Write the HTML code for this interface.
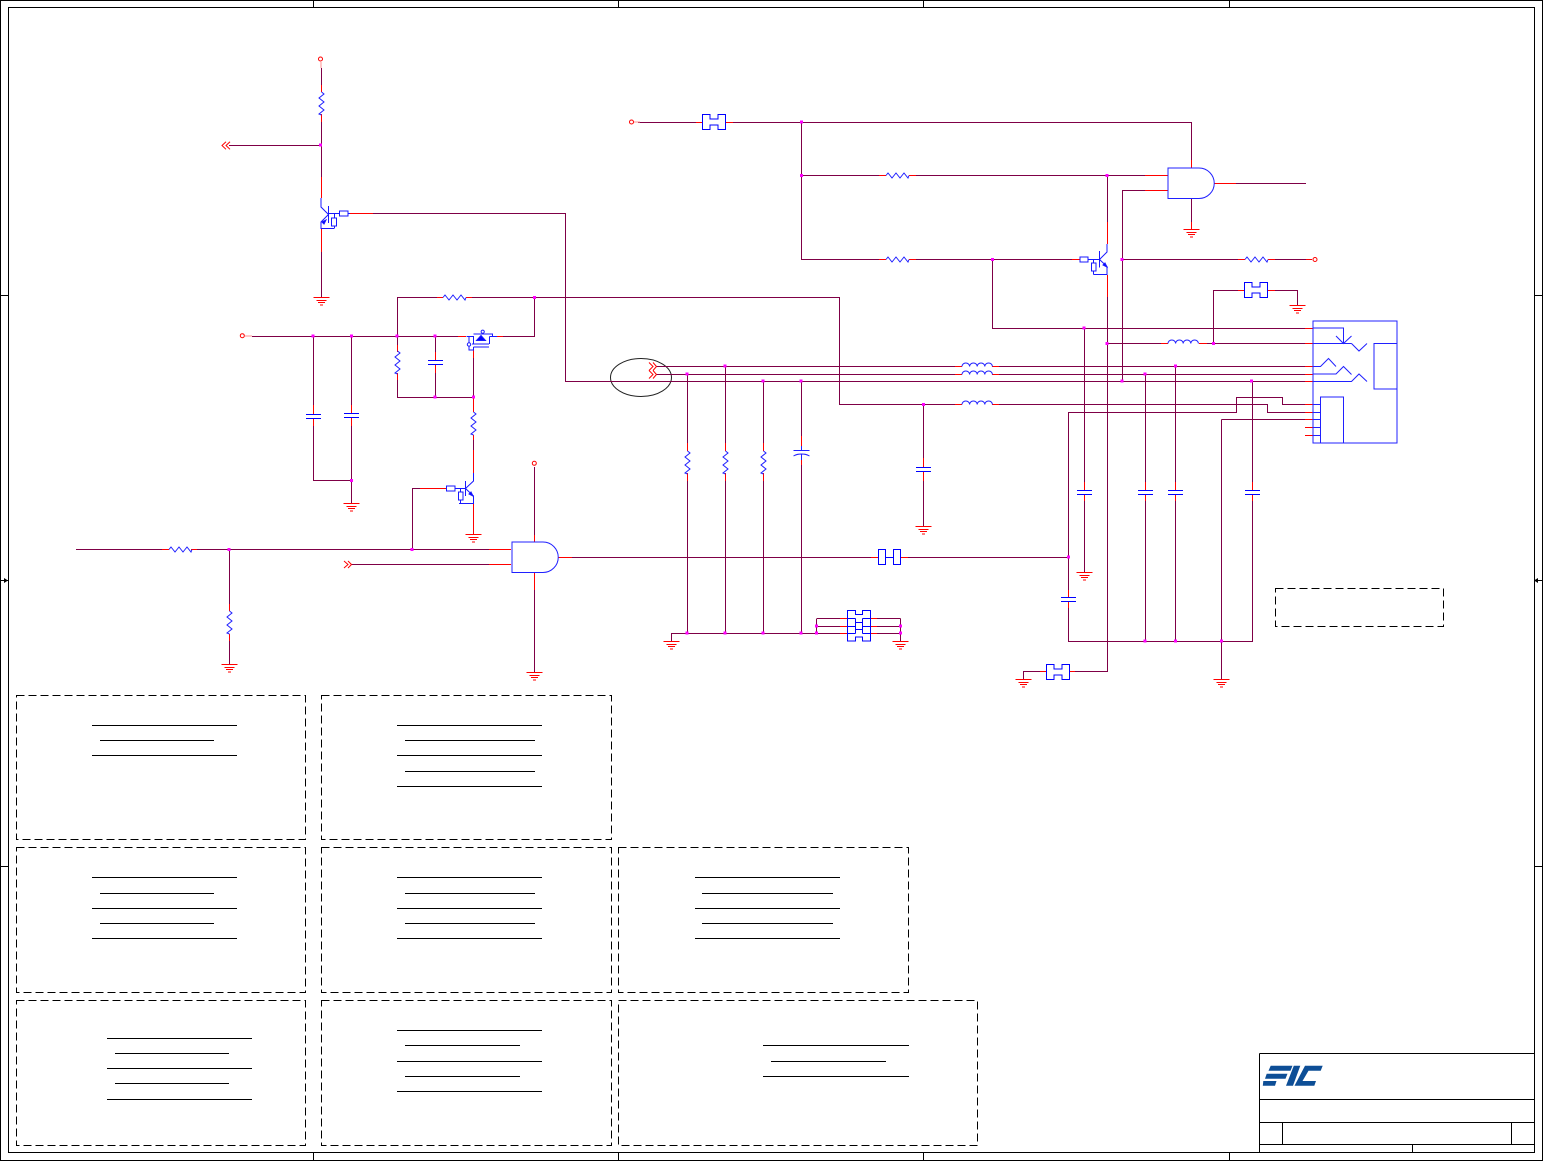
<!DOCTYPE html>
<html>
<head>
<meta charset="utf-8">
<title>Schematic</title>
<style>
html,body{margin:0;padding:0;background:#fff}
svg{display:block}
</style>
</head>
<body>
<svg xmlns="http://www.w3.org/2000/svg" width="1543" height="1161" viewBox="0 0 1543 1161" fill="none">
<defs>
<g id="gnd" stroke="#ff0000"><path d="M-8 0H8M-5 3H5M-3.5 5H3.5M-1.5 7.500H1.500"/></g>
<path id="rv" stroke="#2020ff" d="M0 0l2.500 2l-5 4l5 4l-5 4l5 4l-5 4l2.500 1"/>
<path id="rh" stroke="#2020ff" d="M0 0l2 -2.500l4 5l4 -5l4 5l4 -5l4 5l1 -2.500"/>
<path id="capv" stroke="#0000ff" d="M-7.500 0H7.500M-7.500 4H7.500"/>
<path id="conn" stroke="#0000ff" d="M0 0H7.500V4.500H15.500V0H23V15H15.500V10.500H7.500V15H0Z"/>
<path id="ind" stroke="#2020ff" d="M0 0a3.800 3.500 0 0 1 7.600 0a3.800 3.500 0 0 1 7.600 0a3.800 3.500 0 0 1 7.600 0a3.800 3.500 0 0 1 7.600 0"/>
<rect id="j" x="-1.500" y="-1.500" width="3" height="3" fill="#ff00ff"/>
</defs>

<!-- frame -->
<g stroke="#000">
<rect x="0.500" y="0.500" width="1542" height="1160"/>
<rect x="8.500" y="7.500" width="1526" height="1145"/>
<path d="M313.500 0V8M618.500 0V8M923.500 0V8M1229.500 0V8M313.500 1152V1160M618.500 1152V1160M923.500 1152V1160M1229.500 1152V1160M0 295.500H8M0 866.500H8M1534 295.500H1542M1534 866.500H1542M0 580.500H8M1534 580.500H1542"/>
</g>
<path fill="#000" d="M8 580.500L4 578V583ZM1534 580.500L1538 578V583Z"/>

<!-- title block -->
<g stroke="#000">
<path d="M1259.500 1053.500H1534M1259.500 1053.500V1152M1259.500 1099.500H1534M1259.500 1122.500H1534M1259.500 1144.500H1534M1282.500 1122.500V1144.500M1511.500 1122.500V1144.500M1412.500 1144.500V1152"/>
</g>
<g fill="#0d4e96">
<path d="M1270.700 1065.700H1292.500L1290.500 1070.700H1268.500ZM1266.700 1073.700H1287.500L1285.500 1078.700H1265ZM1263.300 1081H1276.500L1275 1085.700H1262.800Z"/>
<path d="M1293.800 1065.700H1300.300L1293 1085.700H1286Z"/>
<path d="M1305 1065.700H1322.700L1320.700 1070.700H1308.500L1302.500 1081H1316L1314.300 1085.700H1294.500Z"/>
</g>

<!-- dashed boxes -->
<g stroke="#000" stroke-dasharray="8 4">
<rect x="16.500" y="695.500" width="289" height="144"/>
<rect x="321.500" y="695.500" width="290" height="144"/>
<rect x="16.500" y="847.500" width="289" height="145"/>
<rect x="321.500" y="847.500" width="290" height="145"/>
<rect x="618.500" y="847.500" width="290" height="145"/>
<rect x="16.500" y="1000.500" width="289" height="145"/>
<rect x="321.500" y="1000.500" width="290" height="145"/>
<rect x="618.500" y="1000.500" width="359" height="145"/>
<rect x="1275.500" y="588.500" width="168" height="38"/>
</g>
<g stroke="#000">
<path d="M92 725.500H237M100 740.500H214M92 755.500H237"/>
<path d="M397 725.500H542M405 740.500H535M397 755.500H542M405 771.500H535M397 786.500H542"/>
<path d="M92 877.500H237M100 893.500H214M92 908.500H237M100 923.500H214M92 938.500H237"/>
<path d="M397 877.500H542M405 893.500H535M397 908.500H542M405 923.500H535M397 938.500H542"/>
<path d="M695 877.500H840M702 893.500H833M695 908.500H840M702 923.500H833M695 938.500H840"/>
<path d="M107 1038.500H252M115 1053.500H229M107 1068.500H252M115 1083.500H229M107 1099.500H252"/>
<path d="M397 1030.500H542M405 1045.500H520M397 1061.500H542M405 1076.500H520M397 1091.500H542"/>
<path d="M763 1045.500H909M771 1061.500H886M763 1076.500H909"/>
</g>

<ellipse cx="641" cy="377.500" rx="30.500" ry="19" stroke="#222"/>

<!-- purple wires -->
<path stroke="#7f0046" d="
M321.500 68V85M321.500 122V177M321.500 252V297
M229 145.500H321.500
M373 213.500H565.500V381.500H1305
M397.500 345V336.500M397.500 380V397.500H473.500
M397.500 336.500V297.500H437M472 297.500H839.500V404.500H955
M252 336.500H458
M313.500 336.500V405M313.500 426V480.500H351.500
M351.500 336.500V405M351.500 426V503
M435.500 336.500V352M435.500 373V397.500
M503 336.500H534.500V297.500
M473.500 358V397.500M473.500 440V450
M412.500 549.500V488.500H420
M76 549.500H162M197 549.500H489
M351 564.500H489
M229.500 549.500V604M229.500 641V664
M534.500 467V535M534.500 590V672
M572 557.500H871M908 557.500H1068.500
M638 122.500H696M733 122.500H1191.500V160
M801.500 122.500V259.500H879M916 259.500H1072
M801.500 175.500H879M916 175.500H1145
M992.500 259.500V328.500H1305
M1107.500 175.500V222M1107.500 297V671.500H1075
M1122.500 381.500V190.500H1145
M1122.500 259.500H1238M1275 259.500H1306
M1236 183.500H1306
M1191.500 198.500V222
M1107.500 343.500H1161M1207 343.500H1305
M1213.500 343.500V290.500H1238M1275 290.500H1297.500V305
M656 366.500H955M999 366.500H1305
M656 374.500H955M999 374.500H1305
M999 404.500H1267.500V412.500H1305
M1068.500 557.500V412.500H1236.500V397.500H1282.500V404.500H1305
M1221.500 419.500H1305M1221.500 419.500V679
M1068.500 557.500V590M1068.500 608V641.500H1252.500V501M1252.500 381.500V482
M1084.500 328.500V482M1084.500 501V572
M1145.500 374.500V482M1145.500 501V641.500
M1175.500 366.500V482M1175.500 501V641.500
M687.500 374.500V443M687.500 481V633.500
M725.500 366.500V443M725.500 481V633.500
M763.500 381.500V443M763.500 481V633.500
M801.500 381.500V436M801.500 465V633.500
M671.500 641V633.500H840
M817 618.500H840M817 626.500H840M816.500 618.500V633.500
M877 618.500H900.500M877 626.500H900.500M877 633.500H900.500M900.500 618.500V641
M923.500 404.500V458M923.500 481V526
M1023.500 679V671.500H1040
"/>

<!-- red stubs -->
<path stroke="#ff0000" d="
M321.500 85V92M321.500 114V122M321.500 177V198M321.500 228V252
M350 213.500H373
M437 297.500H443M466 297.500H472
M458 336.500H466M497 336.500H503
M397.500 345V352M397.500 373V380
M435.500 352V360M435.500 365V373
M313.500 405V414M313.500 418V426
M351.500 405V413M351.500 417V426
M473.500 350V358M473.500 397.500V412M473.500 435V440M473.500 450V473M473.500 503V534
M420 488.500H447
M162 549.500H169M191 549.500H197
M489 549.500H511M489 564.500H511
M229.500 604V611M229.500 634V641
M534.500 535V542M534.500 572V590
M558 557.500H572M871 557.500H878M901 557.500H908
M696 122.500H702M726 122.500H733
M1191.500 160V168M1191.500 222V230
M1214 183.500H1236
M879 175.500H886M909 175.500H916M879 259.500H886M909 259.500H916
M1072 259.500H1080
M1145 175.500H1168M1145 190.500H1168
M1107.500 222V244M1107.500 275V297
M1238 259.500H1245M1268 259.500H1275M1238 290.500H1244M1268 290.500H1275
M1306 259.500H1312
M1161 343.500H1168M1199 343.500H1207
M1305 328.500H1313M1305 343.500H1313M1305 366.500H1313M1305 374.500H1313M1305 381.500H1313M1305 404.500H1313M1305 412.500H1313M1305 419.500H1313M1305 427.500H1313M1305 435.500H1313
M955 366.500H962M992 366.500H999M955 374.500H962M992 374.500H999M955 404.500H962M992 404.500H999
M1084.500 482V490M1084.500 494V501
M1145.500 482V490M1145.500 494V501
M1175.500 482V490M1175.500 494V501
M1252.500 482V490M1252.500 494V501
M1068.500 590V597M1068.500 601V608
M923.500 458V467M923.500 472V481
M687.500 443V451M687.500 473V481M725.500 443V451M725.500 473V481M763.500 443V451M763.500 473V481
M801.500 436V446M801.500 460V465
M840 618.500H847M840 626.500H847M840 633.500H847M871 618.500H877M871 626.500H877M871 633.500H877
M1040 671.500H1046M1069 671.500H1075
"/>

<!-- terminals and off-page arrows -->
<g stroke="#ff0000">
<circle cx="320.500" cy="59" r="2"/>
<circle cx="242.300" cy="335.700" r="2"/>
<circle cx="631.500" cy="122" r="2"/>
<circle cx="534.300" cy="463.300" r="2"/>
<circle cx="1315" cy="259.500" r="2"/>
<path d="M226 141.700L222 145.500L226 149.300M230 141.700L226 145.500L230 149.300"/>
<path d="M344 561L348 564.500L344 568M348 561L351.500 564.500L348 568"/>
<path d="M649 362.500L653 366.500L649 370.500M653 362.500L656.500 366.500L653 370.500"/>
<path d="M649 370.500L653 374.500L649 378.500M653 370.500L656.500 374.500L653 378.500"/>
</g>
<path stroke="#ff9090" d="M321 62V68M245 336H252M634 122H640"/>

<!-- grounds -->
<use href="#gnd" x="321.500" y="297.500"/>
<use href="#gnd" x="351.500" y="503.500"/>
<use href="#gnd" x="473.500" y="534.500"/>
<use href="#gnd" x="229.500" y="664.500"/>
<use href="#gnd" x="534.500" y="672.500"/>
<use href="#gnd" x="671.500" y="641.500"/>
<use href="#gnd" x="900.500" y="641.500"/>
<use href="#gnd" x="923.500" y="526.500"/>
<use href="#gnd" x="1084.500" y="572.500"/>
<use href="#gnd" x="1191.500" y="229.500"/>
<use href="#gnd" x="1297.500" y="305.500"/>
<use href="#gnd" x="1023.500" y="679.500"/>
<use href="#gnd" x="1221.500" y="679.500"/>

<!-- resistors -->
<use href="#rv" x="321.500" y="92"/>
<use href="#rv" x="397.500" y="351"/>
<use href="#rv" x="473.500" y="412"/>
<use href="#rv" x="229.500" y="611"/>
<use href="#rv" x="687.500" y="451"/>
<use href="#rv" x="725.500" y="451"/>
<use href="#rv" x="763.500" y="451"/>
<use href="#rh" x="443" y="297.500"/>
<use href="#rh" x="169" y="549.500"/>
<use href="#rh" x="886" y="175.500"/>
<use href="#rh" x="886" y="259.500"/>
<use href="#rh" x="1245" y="259.500"/>

<!-- capacitors -->
<use href="#capv" x="313.500" y="414.500"/>
<use href="#capv" x="351.500" y="413.500"/>
<use href="#capv" x="435.500" y="360.500"/>
<use href="#capv" x="923.500" y="467.500"/>
<use href="#capv" x="1084.500" y="490.500"/>
<use href="#capv" x="1145.500" y="490.500"/>
<use href="#capv" x="1175.500" y="490.500"/>
<use href="#capv" x="1252.500" y="490.500"/>
<use href="#capv" x="1068.500" y="597.500"/>
<path stroke="#2020ff" d="M801.500 446V450.500M793.500 450.500H809.500M793.500 456C797 454 799 454 801.500 454C804 454 806 454 809.500 456M801.500 454V460"/>

<!-- inductors -->
<use href="#ind" x="962" y="366.500"/>
<use href="#ind" x="962" y="374.500"/>
<use href="#ind" x="962" y="404.500"/>
<use href="#ind" x="1168" y="343.500"/>

<!-- connectors -->
<use href="#conn" x="702.500" y="114.500"/>
<use href="#conn" x="1244.500" y="282.500"/>
<use href="#conn" x="1046.500" y="664.500"/>
<g stroke="#0000ff">
<path d="M847.500 610.500H855.500V614.500H862.500V610.500H870.500V641H862.500V637H855.500V641H847.500Z"/>
<path d="M847.500 618.500H855.500M847.500 626.500H855.500M847.500 633.500H855.500M862.500 618.500H870.500M862.500 626.500H870.500M862.500 633.500H870.500M855.500 618.500V633.500M862.500 618.500V633.500M855.500 622.500H862.500M855.500 629.500H862.500"/>
<rect x="878.500" y="549.500" width="7" height="15"/>
<rect x="893.500" y="549.500" width="7" height="15"/>
<path d="M885.500 557.500H893.500"/>
</g>

<!-- AND gates -->
<g stroke="#2020ff">
<path d="M512 542H543A15.200 15.200 0 0 1 543 572.500H512Z"/>
<path d="M1168 168H1199A15.200 15.200 0 0 1 1199 198.500H1168Z"/>
</g>

<!-- transistors -->
<g stroke="#1818ff">
<path d="M321 198V207L328.500 214.500L321 222V228.500H334M328.500 206V223M328.500 213.500H339.500M334.500 213.500V218M334.500 226V228.500"/>
<rect x="331.500" y="218" width="5" height="8"/>
<rect x="339.500" y="211" width="8.500" height="5"/>
<path d="M348 213.500H350"/>
<path fill="#0000ff" d="M322 222L326 220L324 224Z"/>

<path d="M473.500 473V481L465.500 488.500L473.500 496V503.500H459M465.500 481V496M455 488.500H465.500M460.500 488.500V492M460.500 500V503.500"/>
<rect x="458.500" y="492" width="4.500" height="8"/>
<rect x="446.500" y="486" width="8.500" height="5"/>
<path fill="#0000ff" d="M473 496L469 494L471 492Z"/>

<path d="M1107 244V252L1099.500 259.500L1107 266.500V274.500H1093.500M1099.500 251V267.500M1088 259.500H1099.500M1093.500 259.500V263M1093.500 271V274.500"/>
<rect x="1091.500" y="263" width="4.500" height="8"/>
<rect x="1080" y="257" width="8" height="5"/>
<path fill="#0000ff" d="M1107 267L1103 265L1105 263Z"/>

<!-- MOSFET -->
<path d="M466.500 336.500H473.500V344M473.500 334H492.500V337M489.500 336.500H497M489.500 336.500V344M472 344H489M473.500 347H489M473.500 347V350H469V346M469 336.500V343"/>
<circle cx="482.700" cy="331.700" r="1.600"/>
<circle cx="469" cy="344.500" r="1.700"/>
<path fill="#0000ff" d="M481 335.500L485.500 340.500H476.500Z"/>
</g>

<!-- jack block -->
<g stroke="#2020ff">
<rect x="1313" y="321" width="84" height="122"/>
<path d="M1313 328H1343.500V343.500M1313 343.500H1351.500M1336 336L1343.500 343.500L1351.500 336M1351.500 343.500L1359 351L1367 343.500"/>
<path d="M1313 366.500H1320.500L1328.500 358.500L1336 366.500"/>
<path d="M1313 374H1336L1343.500 366.500L1351.500 374.500"/>
<path d="M1313 381.500H1351.500L1359 374L1367 381.500"/>
<path d="M1397 343.500H1374V389H1397"/>
<path d="M1320.500 443V397H1343.500V443"/>
<path d="M1313 404.500H1320.500M1313 412.500H1320.500M1313 419.500H1320.500M1313 427.500H1320.500M1313 435.500H1320.500"/>
</g>

<!-- junctions -->
<use href="#j" x="320.500" y="145"/>
<use href="#j" x="313" y="336"/>
<use href="#j" x="351.500" y="336"/>
<use href="#j" x="397" y="336"/>
<use href="#j" x="435" y="336"/>
<use href="#j" x="534.500" y="297.500"/>
<use href="#j" x="435" y="397"/>
<use href="#j" x="473.500" y="397"/>
<use href="#j" x="351.500" y="480.500"/>
<use href="#j" x="229" y="549.500"/>
<use href="#j" x="412" y="549.500"/>
<use href="#j" x="801.500" y="122"/>
<use href="#j" x="801.500" y="175.500"/>
<use href="#j" x="992.500" y="259.500"/>
<use href="#j" x="1107" y="175.500"/>
<use href="#j" x="1122" y="259.500"/>
<use href="#j" x="1084" y="328"/>
<use href="#j" x="1107" y="343.500"/>
<use href="#j" x="1213.500" y="343.500"/>
<use href="#j" x="725" y="366"/>
<use href="#j" x="687" y="374"/>
<use href="#j" x="763" y="381"/>
<use href="#j" x="801" y="381"/>
<use href="#j" x="923.500" y="404.500"/>
<use href="#j" x="1122" y="381"/>
<use href="#j" x="1145" y="374"/>
<use href="#j" x="1175.500" y="366"/>
<use href="#j" x="1251.500" y="381"/>
<use href="#j" x="1068.500" y="557"/>
<use href="#j" x="1145" y="641"/>
<use href="#j" x="1175.500" y="641"/>
<use href="#j" x="1221.500" y="641"/>
<use href="#j" x="687" y="633"/>
<use href="#j" x="725" y="633"/>
<use href="#j" x="763" y="633"/>
<use href="#j" x="801" y="633"/>
<use href="#j" x="816.500" y="633"/>
<use href="#j" x="816.500" y="626"/>
<use href="#j" x="900.500" y="626"/>
<use href="#j" x="900.500" y="633"/>
</svg>
</body>
</html>
